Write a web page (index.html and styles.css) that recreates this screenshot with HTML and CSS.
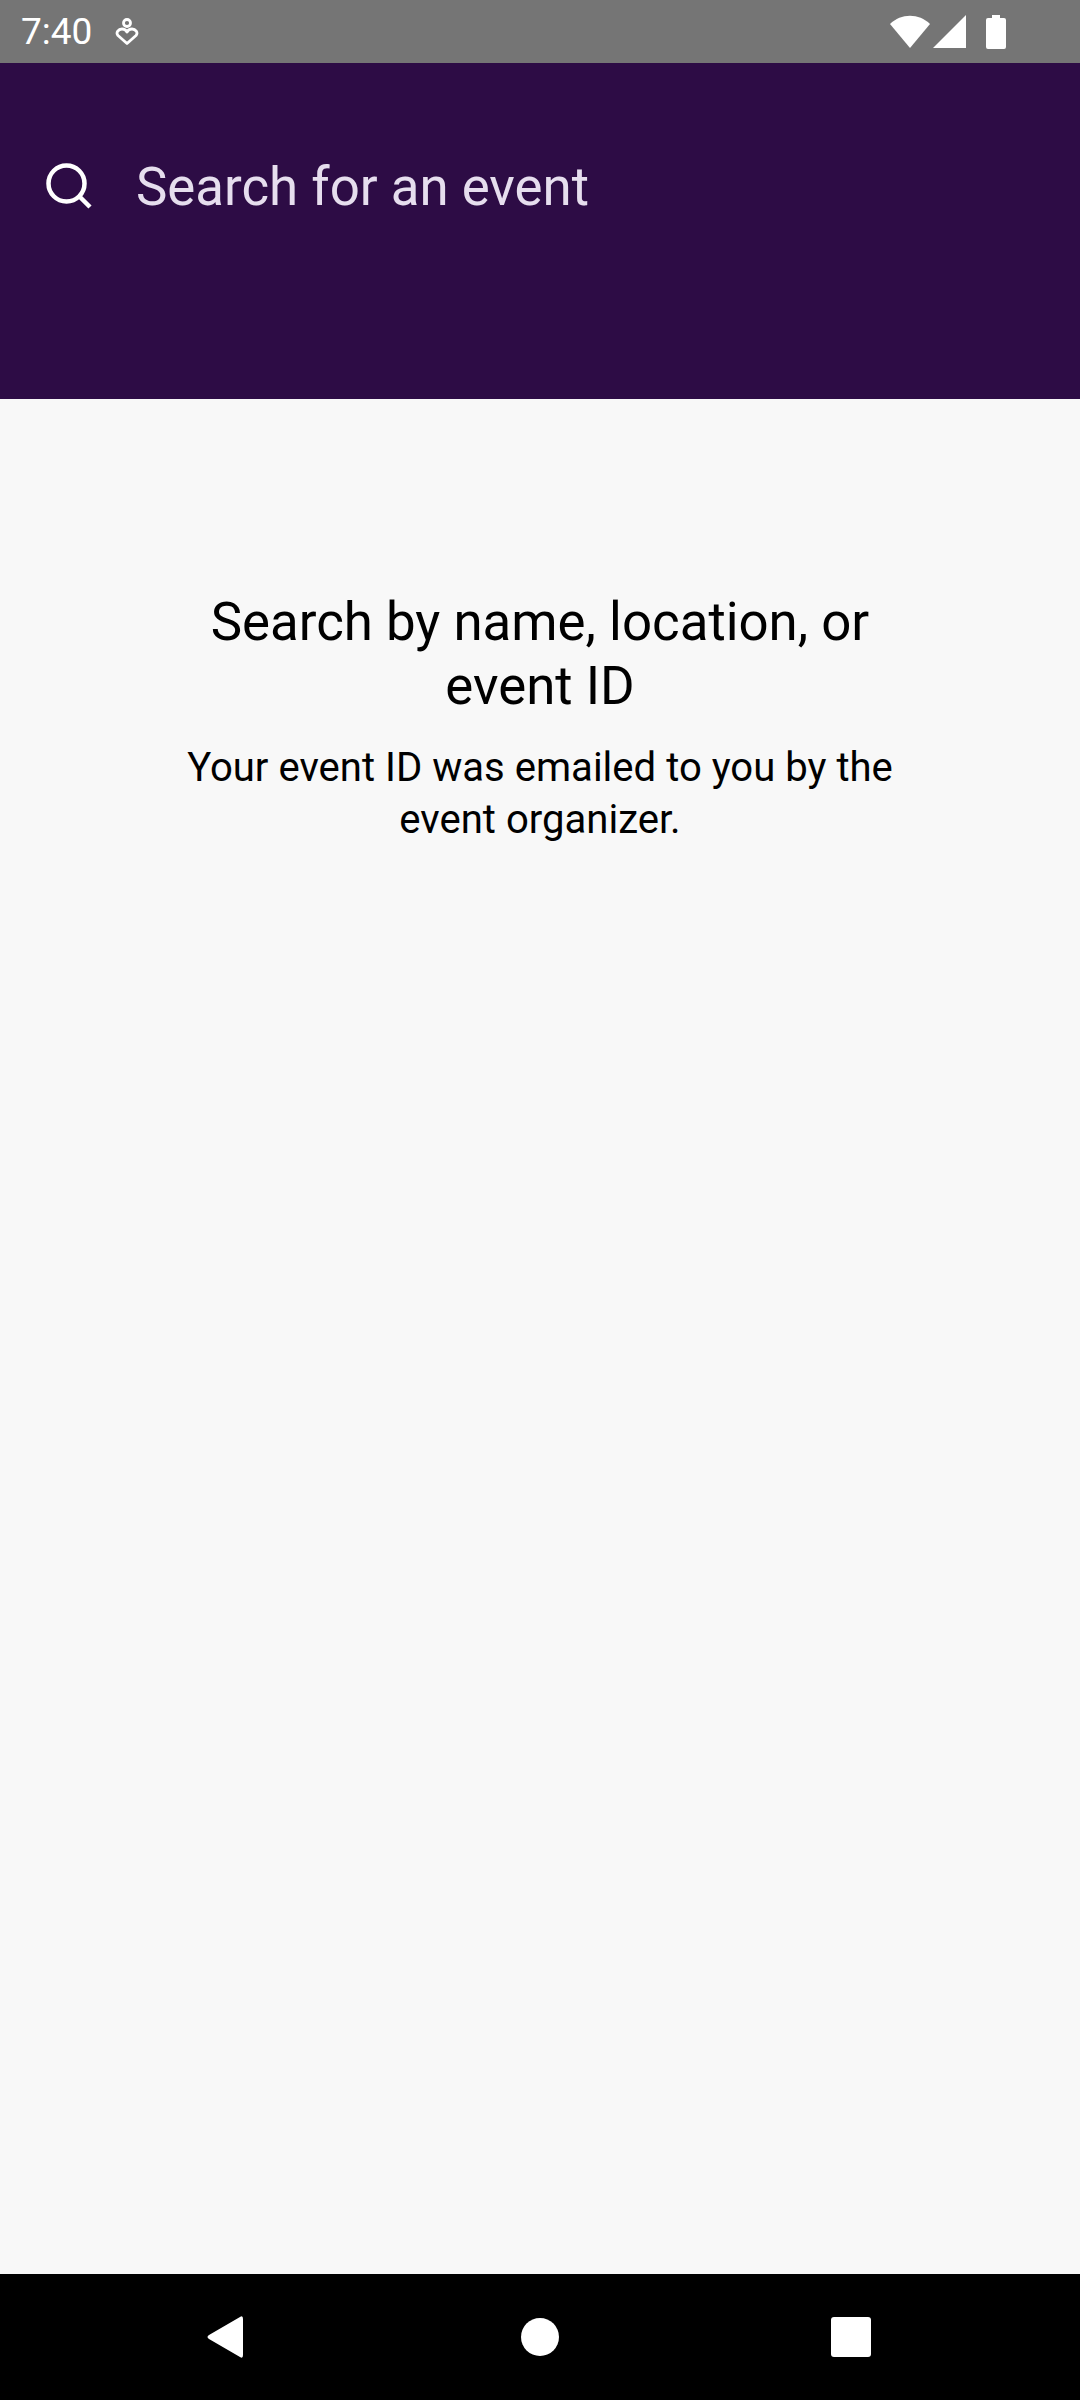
FILE: index.html
```html
<html>
<head>
<link rel="stylesheet" href="styles.css">
</head>
<body>
<div class="statusbar">
    <div class="status-left">
        <span class="time">7:40</span>
        <svg class="notif" width="24" height="28" viewBox="0 0 24 28" fill="none" stroke="#fff" stroke-width="2.8">
            <circle cx="12" cy="5" r="3.5"/>
            <path d="M12 25.5 L3 17.5 C0.5 14.5 3.5 11 7 11 C9 11 11 12 12 14 C13 12 15 11 17 11 C20.5 11 23.5 14.5 21 17.5 Z" stroke-linejoin="round"/>
        </svg>
    </div>
    <div class="status-right">
        <svg class="wifi" width="40" height="34" viewBox="0 0 40 34"><path d="M0 9 C11 -2 29 -2 40 9 L20 33 Z" fill="#fff"/></svg>
        <svg class="signal" width="34" height="34" viewBox="0 0 34 34"><path d="M33 0 V33 H0 Z" fill="#fff"/></svg>
        <svg width="20" height="34" viewBox="0 0 20 34"><path d="M6 0 H14 V3 H18 Q20 3 20 5 V32 Q20 34 18 34 H2 Q0 34 0 32 V5 Q0 3 2 3 H6 Z" fill="#fff"/></svg>
    </div>
</div>
<div class="header">
    <svg class="search-icon" width="46" height="46" viewBox="0 0 46 46" fill="none" stroke="#fff" stroke-width="4.5">
        <circle cx="20.5" cy="20.5" r="18"/>
        <path d="M33 33 L44 44"/>
    </svg>
    <span class="placeholder">Search for an event</span>
</div>
<div class="content">
    <h1>Search by name, location, or<br>event ID</h1>
    <p>Your event ID was emailed to you by the<br>event organizer.</p>
</div>
<div class="navbar">
    <svg width="38" height="44" viewBox="0 0 38 44"><path d="M34 2 Q37 0 37 4 V40 Q37 44 34 42 L3 24 Q0 22 3 20 Z" fill="#fff"/></svg>
    <div class="nav-circle"></div>
    <div class="nav-square"></div>
</div>
</body></html>
```

FILE: styles.css
```css
body, html {
    margin: 0;
    padding: 0;
    height: 2400px;
    width: 1080px;
    overflow: hidden;
}
body {
    display: flex;
    flex-direction: column;
    background: #f8f8f8;
    font-family: Roboto, sans-serif;
}
.statusbar {
    height: 63px;
    background: #757575;
    display: flex;
    justify-content: space-between;
    align-items: center;
    padding: 0 74px 0 21px;
    color: white;
}
.status-left, .status-right {
    display: flex;
    align-items: center;
}
.time {
    font-size: 37px;
    margin-right: 23px;
}
.wifi {
    margin-right: 3px;
}
.signal {
    margin-right: 19px;
}
.header {
    height: 336px;
    box-sizing: border-box;
    background: #2d0c45;
    display: flex;
    align-items: flex-start;
    padding: 94px 0 0 46px;
}
.search-icon {
    margin-top: 6px;
    margin-right: 44px;
}
.placeholder {
    font-size: 52.8px;
    line-height: 60px;
    color: #e6deee;
}
.content {
    flex: 1;
    text-align: center;
    padding-top: 191px;
}
.content h1 {
    margin: 0 0 24px;
    font-weight: normal;
    font-size: 52.8px;
    line-height: 64px;
    color: #000;
}
.content p {
    margin: 0;
    font-size: 40.1px;
    line-height: 52px;
    color: #000;
}
.navbar {
    height: 126px;
    background: #000;
    display: flex;
    align-items: center;
    padding-left: 206px;
}
.nav-circle {
    width: 38px;
    height: 38px;
    border-radius: 50%;
    background: #fff;
    margin-left: 277px;
}
.nav-square {
    width: 40px;
    height: 40px;
    border-radius: 3px;
    background: #fff;
    margin-left: 272px;
}
```
